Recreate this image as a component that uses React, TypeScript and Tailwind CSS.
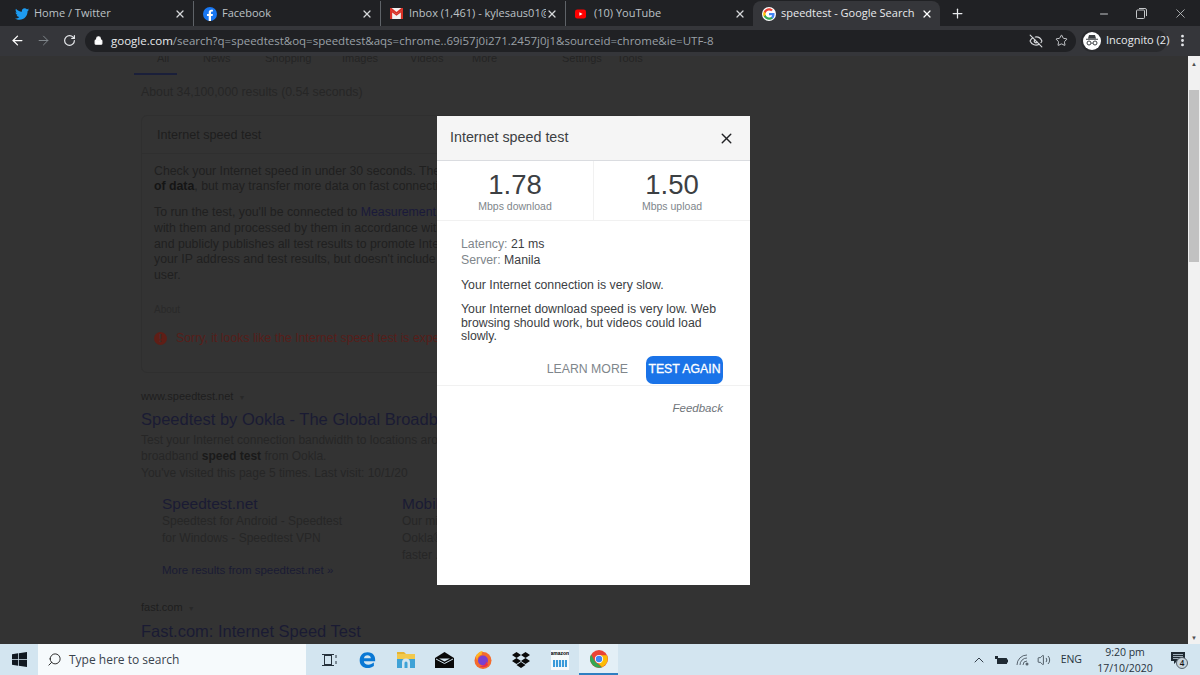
import React from "react";
import { ArrowLeft, ArrowRight, RotateCw, Lock, EyeOff, Star, Plus, X, Minus, EllipsisVertical, Search, ChevronUp, Volume2 } from "lucide-react";

const TwitterIcon = () => (
  <svg width="14" height="12" viewBox="0 0 24 20" className="shrink-0"><path fill="#1d9bf0" d="M24 2.4c-.9.4-1.8.7-2.8.8 1-.6 1.8-1.6 2.2-2.7-1 .6-2 1-3.100 1.200C19.300.7 18 0 16.600 0c-3.200 0-5.500 3-4.800 6C7.700 5.800 4.100 3.900 1.700.9.400 3.100 1 6 3.200 7.400c-.8 0-1.600-.2-2.200-.6 0 2.300 1.600 4.400 4 4.900-.7.200-1.500.2-2.200.1.600 1.900 2.400 3.300 4.600 3.400C5.300 17.300 2.700 18 0 17.800 2.200 19.200 4.800 20 7.500 20c9.100 0 14.300-7.700 14-14.600 1-.7 1.800-1.600 2.500-3z" /></svg>
);
const FacebookIcon = () => (
  <svg width="14" height="14" viewBox="0 0 24 24" className="shrink-0"><circle cx="12" cy="12" r="12" fill="#1877f2" /><path fill="#fff" d="M16.500 15.500l.5-3.500h-3.300V9.800c0-1 .5-1.900 2-1.900H17V5c0 0-1.400-.2-2.700-.2-2.700 0-4.500 1.600-4.500 4.600V12H6.800v3.500h3V24h3.900v-8.500z" /></svg>
);
const GmailIcon = () => (
  <svg width="13" height="11" viewBox="0 0 24 20" className="shrink-0"><rect width="24" height="20" rx="1.500" fill="#f2f2f2" /><path fill="#d93025" d="M0 2l12 9 12-9v18h-4V8l-8 6-8-6v12H0z" /><path fill="#d93025" d="M0 0h3l9 7 9-7h3v3L12 11 0 3z" /></svg>
);
const YouTubeIcon = () => (
  <svg width="11" height="10" viewBox="0 0 24 20" className="shrink-0"><rect width="24" height="20" rx="5" fill="#f00" /><path fill="#fff" d="M9.500 6v8l7-4z" /></svg>
);
const GoogleIcon = () => (
  <svg width="14" height="14" viewBox="0 0 48 48" className="shrink-0"><circle cx="24" cy="24" r="24" fill="#fff" /><path fill="#4285f4" d="M43 24.500c0-1.400-.1-2.700-.4-4H24v7.600h10.900c-.5 2.500-1.900 4.600-4 6v5h6.400C41 35.600 43 30.500 43 24.500z" /><path fill="#34a853" d="M24 44c5.400 0 9.900-1.800 13.300-4.900l-6.400-5c-1.800 1.200-4.100 1.900-6.900 1.900-5.200 0-9.600-3.500-11.200-8.300H6.200v5.100C9.500 39.500 16.300 44 24 44z" /><path fill="#fbbc05" d="M12.800 27.700c-.8-2.400-.8-5 0-7.400v-5.100H6.200c-2.800 5.600-2.800 12 0 17.600z" /><path fill="#ea4335" d="M24 11.900c3 0 5.600 1 7.700 3l5.700-5.700C33.900 6 29.400 4 24 4 16.300 4 9.500 8.500 6.200 15.200l6.600 5.100c1.600-4.900 6-8.400 11.200-8.400z" /></svg>
);

type TabProps = { icon: React.ReactNode; label: string; width: string; active?: boolean; divider?: boolean; fade?: boolean };
function Tab({ icon, label, width, active, divider, fade }: TabProps) {
  return (
    <div className={`${width} h-full flex items-center pr-[7px] shrink-0 ${active ? "bg-[#35363a] rounded-t-[8px] text-[#e8eaed] pl-[9px]" : "text-[#bdc1c6] pl-[9px]"} ${divider ? "border-r border-[#5f6368]" : ""}`}>
      <span className="w-[19px] flex items-center shrink-0">{icon}</span>
      <span className={`flex-1 min-w-0 whitespace-nowrap overflow-hidden text-[11px] ${fade ? "pr-[4px]" : ""}`}>{label}</span>
      <X size={12} strokeWidth={2.5} className={`shrink-0 ${active ? "text-white" : "text-[#d5d7da]"}`} />
    </div>
  );
}

function ChromeBar() {
  return (
    <div className="h-[56px] shrink-0 flex flex-col font-['Open_Sans',sans-serif]">
      <div className="h-[26px] bg-[#202124] flex items-stretch shrink-0 pt-[1px]">
        <div className="w-[6px] shrink-0" />
        <Tab icon={<TwitterIcon />} label="Home / Twitter" width="w-[188px]" divider />
        <Tab icon={<FacebookIcon />} label="Facebook" width="w-[187px]" divider />
        <Tab icon={<GmailIcon />} label="Inbox (1,461) - kylesaus01@gmai" width="w-[185px]" divider />
        <Tab icon={<YouTubeIcon />} label="(10) YouTube" width="w-[187px]" />
        <Tab icon={<GoogleIcon />} label="speedtest - Google Search" width="w-[187px]" active />
        <div className="ml-[10px] flex items-center text-[#e8eaed]"><Plus size={15} strokeWidth={2} /></div>
        <div className="ml-auto flex items-center text-[#c4c7c9]">
          <Minus size={12} className="mr-[26px]" />
          <svg width="11" height="11" viewBox="0 0 11 11" fill="none" stroke="currentColor" className="mr-[26px]"><rect x=".5" y="2" width="8" height="8.500" rx="1" /><path d="M3 .5h6a1.500 1.500 0 011.500 1.500v6" /></svg>
          <X size={15} strokeWidth={1.3} className="mr-[12px]" />
        </div>
      </div>
      <div className="h-[30px] bg-[#35363a] flex items-center shrink-0 pb-[1px]">
        <div className="w-[85px] flex items-center pl-[10px] gap-[11px] text-white shrink-0">
          <ArrowLeft size={15} strokeWidth={2} />
          <ArrowRight size={15} strokeWidth={1.6} className="text-[#80868b]" />
          <RotateCw size={13} strokeWidth={2.2} className="text-[#e8eaed] ml-[1px]" />
        </div>
        <div className="w-[991px] h-[22px] bg-[#202124] rounded-full flex items-center pl-[9px] pr-[8px] shrink-0">
          <Lock size={9} strokeWidth={3} className="text-white shrink-0" fill="#fff" />
          <span className="ml-[8px] text-[11.500px] whitespace-nowrap text-[#9aa0a6]"><span className="text-[#e8eaed]">google.com</span>/search?q=speedtest&amp;oq=speedtest&amp;aqs=chrome..69i57j0i271.2457j0j1&amp;sourceid=chrome&amp;ie=UTF-8</span>
          <EyeOff size={14} strokeWidth={2} className="ml-auto text-[#d5d7da] mr-[12px] shrink-0" />
          <Star size={13} strokeWidth={1.7} className="text-[#d5d7da] shrink-0" />
        </div>
        <div className="ml-[5px] w-[86px] h-[22px] bg-[#292a2d] rounded-full flex items-center pl-[2px] shrink-0">
          <span className="w-[18px] h-[18px] bg-white rounded-full flex items-center justify-center shrink-0">
            <svg width="14" height="13" viewBox="0 0 14 13" fill="#3c4043"><path d="M4 1h6l1 3.500H3zM1 4.700h12v1H1z" /><circle cx="4" cy="9" r="2" fill="none" stroke="#3c4043" /><circle cx="10" cy="9" r="2" fill="none" stroke="#3c4043" /><path d="M6 8.700h2v.7H6z" /></svg>
          </span>
          <span className="ml-[5px] text-[11px] text-[#e8eaed] whitespace-nowrap">Incognito (2)</span>
        </div>
        <EllipsisVertical size={15} strokeWidth={2.500} className="ml-[8px] text-[#e8eaed]" />
      </div>
    </div>
  );
}

function Line({ children, className = "" }: { children: React.ReactNode; className?: string }) {
  return <div className={`whitespace-nowrap ${className}`}>{children}</div>;
}

function PageBehind() {
  return (
    <div className="flex-1 min-w-0 overflow-hidden bg-[#333333] font-['Liberation_Sans',sans-serif] text-[#1e1e1e] relative">
      <div className="-mt-[6px] h-[23px] pl-[157px] flex text-[11px] text-[#242424] whitespace-nowrap">
        <span className="w-[46px]">All</span><span className="w-[62px]">News</span><span className="w-[77px]">Shopping</span><span className="w-[68px]">Images</span><span className="w-[62px]">Videos</span><span className="w-[90px]">More</span><span className="w-[55px]">Settings</span><span>Tools</span>
      </div>
      <div className="ml-[134px] w-[43px] h-[1.500px] bg-[#1a1f3a]" />
      <Line className="ml-[141px] mt-[9px] text-[12.300px] leading-[16px] text-[#262626]">About 34,100,000 results (0.54 seconds)</Line>
      <div className="ml-[141px] mt-[15px] w-[500px] h-[258px] border border-[#2f2f2f] rounded-[6px]">
        <div className="h-[38px] border-b border-[#2f2f2f] pl-[15px] flex items-center text-[12.600px] pt-[2px]">Internet speed test</div>
        <div className="pl-[12px] pt-[10px] text-[12.300px] leading-[15.800px] text-[#202020]">
          <Line>Check your Internet speed in under 30 seconds. The speed test usually transfers less than 40 MB</Line>
          <Line><b className="text-[#151515]">of data</b>, but may transfer more data on fast connections.</Line>
          <Line className="mt-[10px]">To run the test, you'll be connected to <span className="text-[#1a1a3a]">Measurement Lab</span> (M-Lab) and your IP</Line>
          <Line>with them and processed by them in accordance with their privacy policy</Line>
          <Line>and publicly publishes all test results to promote Internet research</Line>
          <Line>your IP address and test results, but doesn't include any other info about you as a</Line>
          <Line>user.</Line>
          <Line className="mt-[18px] text-[10px] text-[#292929]">About</Line>
          <div className="mt-[13px] flex items-center gap-[9px] text-[#561e1a] whitespace-nowrap">
            <span className="w-[13px] h-[13px] rounded-full bg-[#5f1e16] text-[#333] text-[10px] leading-[13px] text-center font-bold">!</span>
            Sorry, it looks like the Internet speed test is experiencing issues
          </div>
        </div>
      </div>
      <Line className="ml-[141px] mt-[15px] text-[11px] leading-[16px] text-[#1e1e1e]">www.speedtest.net <span className="ml-[2px] text-[7px] text-[#282828]">▼</span></Line>
      <Line className="ml-[141px] mt-[2px] text-[16.500px] leading-[22px] text-[#1a1b33]">Speedtest by Ookla - The Global Broadband Speed Test</Line>
      <div className="ml-[141px] mt-[2px] text-[12px] leading-[16.500px] text-[#262626]">
        <Line>Test your Internet connection bandwidth to locations around the world with this</Line>
        <Line>broadband <b className="text-[#1a1a1a]">speed test</b> from Ookla.</Line>
        <Line>You've visited this page 5 times. Last visit: 10/1/20</Line>
      </div>
      <div className="ml-[162px] mt-[13px] flex text-[12px] leading-[17px] text-[#262626]">
        <div className="w-[240px] shrink-0">
          <div className="text-[15.500px] leading-[19px] text-[#1a1b33]">Speedtest.net</div>
          <Line>Speedtest for Android - Speedtest</Line>
          <Line>for Windows - Speedtest VPN</Line>
        </div>
        <div>
          <div className="text-[15.500px] leading-[19px] text-[#1a1b33]">Mobile</div>
          <Line>Our mission</Line>
          <Line>Ookla®</Line>
          <Line>faster ...</Line>
        </div>
      </div>
      <Line className="ml-[162px] -mt-[2px] text-[11.500px] leading-[16px] text-[#1a1b33]">More results from speedtest.net »</Line>
      <Line className="ml-[141px] mt-[21px] text-[11px] leading-[16px]">fast.com <span className="ml-[2px] text-[7px] text-[#282828]">▼</span></Line>
      <Line className="ml-[141px] mt-[3px] text-[16.500px] leading-[22px] text-[#1a1b33]">Fast.com: Internet Speed Test</Line>

      <div className="absolute left-[437px] top-[60px] w-[313px] h-[469px] bg-white flex flex-col text-[#3c4043]">
        <div className="h-[45px] shrink-0 bg-[#f5f5f5] border-b border-[#dadce0] flex items-center justify-between pl-[13px] pr-[15px]">
          <span className="text-[14.300px] text-[#3c4043]">Internet speed test</span>
          <X size={17} strokeWidth={2} className="text-[#202124]" />
        </div>
        <div className="h-[60px] shrink-0 flex border-b border-[#f1f1f1]">
          <div className="w-[157px] border-r border-[#f1f1f1] flex flex-col items-center pt-[9px]">
            <span className="text-[27.500px] leading-[30px] text-[#3c4043]">1.78</span>
            <span className="text-[10.500px] leading-[12px] text-[#80868b]">Mbps download</span>
          </div>
          <div className="flex-1 flex flex-col items-center pt-[9px]">
            <span className="text-[27.500px] leading-[30px] text-[#3c4043]">1.50</span>
            <span className="text-[10.500px] leading-[12px] text-[#80868b]">Mbps upload</span>
          </div>
        </div>
        <div className="h-[165px] shrink-0 border-b border-[#f1f1f1] pl-[24px] pr-[27px] pt-[16px] text-[12.300px] leading-[15.500px]">
          <div><span className="text-[#80868b]">Latency:</span> 21 ms</div>
          <div><span className="text-[#80868b]">Server:</span> Manila</div>
          <div className="mt-[10px]">Your Internet connection is very slow.</div>
          <div className="mt-[9.500px] leading-[13.500px]">Your Internet download speed is very low. Web<br />browsing should work, but videos could load slowly.</div>
          <div className="mt-[12px] flex items-center justify-end">
            <span className="text-[#80868b] mr-[18px]">LEARN MORE</span>
            <span className="w-[77px] h-[28px] bg-[#1a73e8] rounded-[7px] text-white flex items-center justify-center font-medium [-webkit-text-stroke:0.3px_white]">TEST AGAIN</span>
          </div>
        </div>
        <div className="pt-[15px] pr-[27px] text-right text-[11.500px] leading-[14px] italic text-[#70757a]">Feedback</div>
      </div>
    </div>
  );
}

function Scrollbar() {
  return (
    <div className="w-[12px] shrink-0 bg-[#f1f1f1] flex flex-col items-center justify-between">
      <div className="w-full">
        <div className="h-[12px] flex items-center justify-center text-[#505050] text-[6px] pt-[5px]">▲</div>
        <div className="mt-[22px] w-full h-[172px] px-[1px]"><div className="w-full h-full bg-[#c1c1c1]" /></div>
      </div>
      <div className="h-[12px] flex items-center justify-center text-[#505050] text-[6px]">▼</div>
    </div>
  );
}

function Taskbar() {
  const slot = "w-[38.500px] h-full flex items-center justify-center shrink-0";
  return (
    <div className="h-[31px] shrink-0 bg-[#d3e5f0] flex items-stretch font-['Open_Sans',sans-serif] text-[#1b2733]">
      <div className="w-[38px] flex items-center justify-center shrink-0">
        <svg width="15" height="15" viewBox="0 0 16 16" fill="#101820"><path d="M0 2.300l6.500-.9v6.200H0zM7.300 1.300L16 0v7.600H7.300zM0 8.400h6.500v6.200L0 13.700zM7.300 8.400H16V16l-8.700-1.300z" /></svg>
      </div>
      <div className="w-[268px] bg-[#f6fafc] flex items-center pl-[9px] shrink-0 text-[12px] text-[#39434d]">
        <Search size={15} strokeWidth={1.5} className="-scale-x-100 text-[#222] mr-[7px]" />
        Type here to search
      </div>
      <div className="flex items-center ml-[4px]">
        <div className="w-[38px] h-full flex items-center justify-center shrink-0">
          <svg width="15" height="14" viewBox="0 0 15 14" fill="none" stroke="#27323c"><rect x="2.500" y="2.500" width="7" height="9" /><path d="M0 1.500h12M0 12.500h12M14 2v3M14 8v3" /></svg>
        </div>
        <div className={slot}>
          <svg width="17" height="18" viewBox="0 0 20 20"><path fill="#0a78d4" d="M10 1C4.500 1 .8 5 .8 10.500S5 19.500 10 19.500c3 0 5.500-1 7.500-2.500v-4c-2 1.500-4 2.500-6.500 2.500-3 0-5-1.500-5.300-4H19c.5-5.500-2-10.500-9-10.500zM5.800 8c.3-2 2-3.500 4.200-3.500S13.800 6 14 8z" /></svg>
        </div>
        <div className={slot}>
          <svg width="18" height="17" viewBox="0 0 18 17"><path fill="#e6b432" d="M0 1h7l2 2H0z" /><path fill="#f2c94c" d="M0 3h18v5H0z" /><path fill="#3fa2d6" d="M0 8h18v9H0z" /><path fill="#d3e5f0" d="M5 17v-5.500a4 4 0 018 0V17h-2.500v-5a1.500 1.500 0 00-3 0v5z" /></svg>
        </div>
        <div className={slot}>
          <svg width="19" height="16" viewBox="0 0 19 16" fill="#0a0a0a"><path d="M0 6L9.500 0 19 6v10H0z" /><path fill="none" stroke="#d3e5f0" d="M1 7l8.500 4.500L18 7" strokeWidth="1" /><path fill="#d3e5f0" d="M4 6.500h11l-5.500 3z" /></svg>
        </div>
        <div className={slot}>
          <svg width="18" height="18" viewBox="0 0 18 18"><circle cx="9" cy="9.500" r="8.500" fill="#f46b2d" /><circle cx="9" cy="9.500" r="5" fill="#7a3fd0" /><path fill="#ffb422" d="M2 5c1.500-3 4-5 7-5-1 1-1.500 2-1 3.500C5.500 4 3 6 3.500 9.500 2.500 8.500 2 7 2 5z" /><path fill="#e8304f" d="M14 14c-2 2.500-6 3-8.500 1 3 .5 6-1 7-4.500z" /></svg>
        </div>
        <div className={slot}>
          <svg width="18" height="16" viewBox="0 0 18 16" fill="#0a0a0a"><path d="M4.500 0L9 3 4.500 6 0 3zM13.500 0L18 3l-4.500 3L9 3zM4.500 6L9 9l-4.500 3L0 9zM13.500 6L18 9l-4.500 3L9 9zM4.500 13L9 10l4.500 3L9 16z" /></svg>
        </div>
        <div className={slot}>
          <div className="w-[18px] h-[20px] bg-[#f6f9fb] flex flex-col items-center overflow-hidden">
            <span className="text-[5px] leading-[7px] font-bold text-black font-['Liberation_Sans',sans-serif]">amazon</span>
            <span className="mt-[3px] w-[14px] h-[7px] bg-[repeating-linear-gradient(90deg,#3a9ad9_0_2px,#e3f1fa_2px_3px)]" />
          </div>
        </div>
        <div className="w-[39px] h-full bg-[#e3eff6] border-b-2 border-[#2f7fc1] flex items-center justify-center shrink-0">
          <svg width="18" height="18" viewBox="0 0 48 48"><circle cx="24" cy="24" r="24" fill="#ea4335" /><path fill="#fbbc05" d="M24 14h21a24 24 0 01-13 32L21.500 34z" /><path fill="#34a853" d="M3 12l11 20 18 14A24 24 0 013 12z" /><circle cx="24" cy="24" r="11" fill="#fff" /><circle cx="24" cy="24" r="8.500" fill="#4285f4" /></svg>
        </div>
      </div>
      <div className="ml-auto flex items-center text-[#27323c] pr-[13px]">
        <ChevronUp size={16} strokeWidth={1.4} className="mr-[8px]" />
        <svg width="13" height="8" viewBox="0 0 13 8" fill="#1f2a33" className="mr-[8px]"><rect x="0" y="0" width="3" height="3" /><rect x="2" y="2" width="10" height="6" rx=".5" /><rect x="12" y="3.500" width="1" height="3" /></svg>
        <svg width="14" height="12" viewBox="0 0 14 12" fill="none" stroke="#5a6670" className="mr-[7px]"><path d="M1 11A10 10 0 0111 1M4 11a7 7 0 017-7M7 11a4 4 0 014-4" /><circle cx="11" cy="10" r="1.500" fill="#5a6670" stroke="none" /></svg>
        <Volume2 size={14} strokeWidth={1.3} className="mr-[10px]" />
        <span className="text-[10.500px] mr-[13px]">ENG</span>
        <div className="w-[60px] text-center text-[10.500px] leading-[16px] mr-[16px]">
          <div>9:20 pm</div>
          <div className="whitespace-nowrap">17/10/2020</div>
        </div>
        <div className="relative w-[16px] h-[18px]">
          <svg width="14" height="12" viewBox="0 0 14 12" fill="#1f2a33" className="absolute left-0 top-[1px]"><path d="M0 0h14v9H6l-3 3V9H0z" /><path d="M2 2.500h10M2 4.500h10M2 6.500h7" stroke="#d3e5f0" strokeWidth=".7" /></svg>
          <span className="absolute left-[5px] top-[6px] w-[12px] h-[12px] rounded-full bg-[#c8d4dc] border border-[#55606a] text-[8px] leading-[10px] text-center text-[#111] font-semibold">4</span>
        </div>
      </div>
    </div>
  );
}

export default function App() {
  return (
    <div className="w-[1200px] h-[675px] flex flex-col overflow-hidden">
      <ChromeBar />
      <div className="flex-1 min-h-0 flex">
        <PageBehind />
        <Scrollbar />
      </div>
      <Taskbar />
    </div>
  );
}
